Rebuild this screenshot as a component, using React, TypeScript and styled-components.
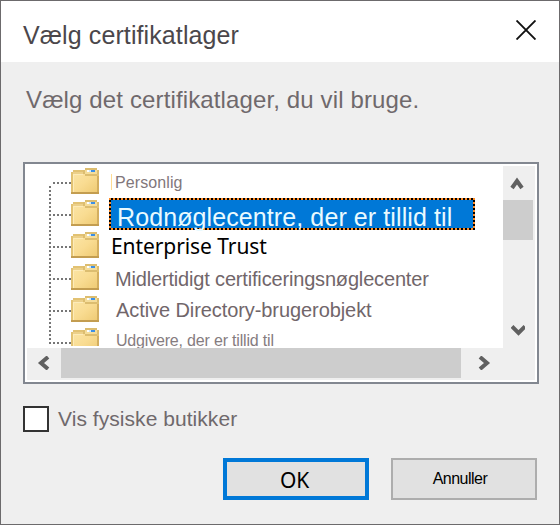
import React from "react";
import styled, { createGlobalStyle } from "styled-components";

const GlobalStyle = createGlobalStyle`
  *, *::before, *::after { box-sizing: border-box; }
  body { margin: 0; font-family: "Liberation Sans", Arial, sans-serif; }
  button { font: inherit; }
`;

const Dialog = styled.div`
  display: flex;
  flex-direction: column;
  width: 560px;
  height: 525px;
  overflow: hidden;
  border: 1px solid #6c6a6c;
  background: #efefef;
`;

const TitleBar = styled.header`
  display: flex;
  justify-content: space-between;
  height: 61px;
  flex: none;
  padding: 0 22px 0 22px;
  background: #fff;
`;

const Title = styled.h1`
  margin: 0;
  padding-top: 4px;
  font-size: 25px;
  font-weight: 400;
  line-height: 61px;
  letter-spacing: 0.1px;
  color: #4b474b;
  white-space: nowrap;
`;

const CloseButton = styled.button`
  display: flex;
  width: 20px;
  height: 20px;
  margin: 19px 1px 0 0;
  padding: 0;
  border: 0;
  background: none;
`;

const Body = styled.main`
  display: flex;
  flex-direction: column;
  padding: 0 20px 0 22px;
`;

const Prompt = styled.p`
  height: 100px;
  margin: 0;
  padding: 18px 0 0 3px;
  font-size: 24px;
  line-height: 40px;
  letter-spacing: 0.13px;
  color: #6f696c;
  white-space: nowrap;
`;

const ListBox = styled.section`
  display: grid;
  grid-template-columns: 476px 32px;
  grid-template-rows: 182px 32px;
  width: 516px;
  height: 222px;
  border: 2px solid #828790;
  padding: 2px;
  background: #fff;
`;

const Tree = styled.ul`
  margin: 0;
  padding: 0;
  overflow: hidden;
  list-style: none;
`;

const TreeRow = styled.li`
  display: flex;
  height: 32px;
`;

const Branch = styled.svg`
  flex: none;
  width: 44px;
  height: 32px;
`;

const FolderSlot = styled.span<{ $cut?: boolean }>`
  flex: none;
  width: 28px;
  height: ${(p) => (p.$cut ? 18 : 26)}px;
  margin-top: 2px;
  overflow: hidden;
`;

type LabelStyle = { x: number; y: number; size: number; spacing: number; color: string; font?: string };

const Label = styled.span<{ $s: LabelStyle }>`
  display: block;
  height: 32px;
  margin-left: ${(p) => p.$s.x - 99}px;
  padding-top: ${(p) => p.$s.y}px;
  font-family: ${(p) => p.$s.font ?? '"Liberation Sans", Arial, sans-serif'};
  font-size: ${(p) => p.$s.size}px;
  line-height: 28px;
  letter-spacing: ${(p) => p.$s.spacing}px;
  color: ${(p) => p.$s.color};
  white-space: nowrap;
`;

const Caret = styled.span`
  width: 1px;
  height: 16px;
  margin: 8px -13px 0 12px;
  background: #ffdc92;
`;

const Selection = styled.span`
  display: block;
  width: 366px;
  height: 32px;
  margin-left: 10px;
  padding: 2px;
  background: repeating-conic-gradient(#000 0 25%, #ff8c27 0 50%) 0 0 / 4px 4px;
`;

const SelectionText = styled.span`
  display: block;
  height: 28px;
  padding: 3px 0 0 6px;
  background: #0078d7;
  font-size: 25px;
  line-height: 28px;
  letter-spacing: 0.1px;
  color: #e9faff;
  white-space: nowrap;
`;

const VerticalBar = styled.div`
  display: flex;
  flex-direction: column;
  align-items: flex-start;
  background: #efefef;
`;

const HorizontalBar = styled.div`
  display: flex;
  grid-column: 1 / -1;
  background: #efefef;
`;

const ArrowCell = styled.span<{ $w: number; $h: number }>`
  display: flex;
  align-items: center;
  justify-content: center;
  width: ${(p) => p.$w}px;
  height: ${(p) => p.$h}px;
`;

const Thumb = styled.div<{ $w: number; $h: number }>`
  width: ${(p) => p.$w}px;
  height: ${(p) => p.$h}px;
  background: #cdcdcd;
`;

const Track = styled.div`
  flex: 1;
`;

const CheckRow = styled.label`
  display: flex;
  height: 26px;
  margin-top: 22px;
  gap: 9px;
  font-size: 21px;
  line-height: 26px;
  letter-spacing: 0.05px;
  color: #6f696c;
`;

const CheckBox = styled.input`
  appearance: none;
  width: 26px;
  height: 26px;
  margin: 0;
  border: 2px solid #333;
  background: #fff;
`;

const Footer = styled.footer`
  display: flex;
  justify-content: flex-end;
  gap: 22px;
  margin-top: 26px;
  padding-right: 2px;
`;

const Button = styled.button<{ $primary?: boolean }>`
  width: 146px;
  height: 42px;
  padding: ${(p) => (p.$primary ? "1px 3px 0 0" : "0 8px 0 0")};
  border: ${(p) => (p.$primary ? "4px solid #0078d7" : "2px solid #adadad")};
  background: #e1e1e1;
  color: #000;
  font-family: ${(p) => (p.$primary ? '"Noto Sans", sans-serif' : '"Liberation Sans", sans-serif')};
  font-size: ${(p) => (p.$primary ? 21 : 16)}px;
  line-height: 28px;
  letter-spacing: ${(p) => (p.$primary ? -0.3 : -0.5)}px;
`;

const Folder = () => (
  <svg width="28" height="26" viewBox="0 0 28 26" shapeRendering="crispEdges">
    <defs>
      <linearGradient id="folderFront" x1="0" y1="0" x2="1" y2="1">
        <stop offset="0" stopColor="#fbe5a6" />
        <stop offset="0.5" stopColor="#f9dc92" />
        <stop offset="1" stopColor="#efcb75" />
      </linearGradient>
    </defs>
    <path d="M0 4h2V2h10v2h14v2h2v20H0z" fill="#e2c273" />
    <path d="M2 4h24v20H2z" fill="url(#folderFront)" />
    <path d="M2 4h10v2H2z" fill="#ecd08a" />
    <path d="M2 6h10v1H3v17H2z" fill="#fdebb8" />
    <path d="M12 2h2V0h12v2h2v4h-2v2H14V6h-2z" fill="#dcbd70" />
    <path d="M14 2h12v4H14z" fill="#f5dd9a" />
    <path d="M16 2h8v2h-8z" fill="#fff" />
    <path d="M18 2h2v2h-2z" fill="#cfe9fc" />
    <path d="M20 2h4v2h-4z" fill="#3c8fe5" />
    <path d="M26 8h2v18h-2z" fill="#d3ae5f" />
    <path d="M0 24h28v2H0z" fill="#c39d50" />
  </svg>
);

const BranchLines = ({ first, last }: { first?: boolean; last?: boolean }) => (
  <Branch viewBox="0 0 44 32" shapeRendering="crispEdges" stroke="#767676" strokeWidth="2">
    <path d={`M23 ${first ? 20 : 0}V${last ? 18 : 32}`} strokeDasharray="2 2" />
    <path d="M26 17H44" strokeDasharray="2 2" />
  </Branch>
);

const chevrons = {
  up: "M2 12L7 5L12 12",
  down: "M1 3.5L7.5 10L14 3.5",
  left: "M11 1L4 7L11 13",
  right: "M2 1L9 7L2 13",
};

const Chevron = ({ dir }: { dir: keyof typeof chevrons }) => (
  <svg width="14" height="14" viewBox="0 0 14 14" fill="none" stroke="#606060" strokeWidth="4">
    <path d={chevrons[dir]} />
  </svg>
);

type Store = { name: string; style?: LabelStyle; caret?: boolean };

const stores: Store[] = [
  { name: "Personlig", caret: true, style: { x: 115, y: 3, size: 16, spacing: 0.1, color: "#81777b" } },
  { name: "Rodnøglecentre, der er tillid til" },
  {
    name: "Enterprise Trust",
    style: { x: 111, y: 2, size: 21, spacing: -0.08, color: "#000", font: '"Noto Sans", sans-serif' },
  },
  { name: "Midlertidigt certificeringsnøglecenter", style: { x: 115, y: 3, size: 20, spacing: -0.17, color: "#71666a" } },
  { name: "Active Directory-brugerobjekt", style: { x: 116, y: 2, size: 20, spacing: -0.08, color: "#71666a" } },
  { name: "Udgivere, der er tillid til", style: { x: 116, y: 1, size: 16, spacing: -0.18, color: "#857c80" } },
];

export default function App() {
  return (
    <>
      <GlobalStyle />
      <Dialog role="dialog">
        <TitleBar>
          <Title>Vælg certifikatlager</Title>
          <CloseButton aria-label="Luk">
            <svg width="20" height="20" viewBox="0 0 20 20" stroke="#111" strokeWidth="1.9">
              <path d="M0.5 0.5L19.5 19.5M19.5 0.5L0.5 19.5" />
            </svg>
          </CloseButton>
        </TitleBar>
        <Body>
          <Prompt>Vælg det certifikatlager, du vil bruge.</Prompt>
          <ListBox>
            <Tree>
              {stores.map((store, i) => (
                <TreeRow key={store.name}>
                  <BranchLines first={i === 0} last={i === stores.length - 1} />
                  <FolderSlot $cut={i === stores.length - 1}>
                    <Folder />
                  </FolderSlot>
                  {store.caret && <Caret />}
                  {store.style ? (
                    <Label $s={store.style}>{store.name}</Label>
                  ) : (
                    <Selection>
                      <SelectionText>{store.name}</SelectionText>
                    </Selection>
                  )}
                </TreeRow>
              ))}
            </Tree>
            <VerticalBar>
              <ArrowCell $w={28} $h={34}>
                <Chevron dir="up" />
              </ArrowCell>
              <Thumb $w={30} $h={40} />
              <Track />
              <ArrowCell $w={30} $h={36}>
                <Chevron dir="down" />
              </ArrowCell>
            </VerticalBar>
            <HorizontalBar>
              <ArrowCell $w={34} $h={30}>
                <Chevron dir="left" />
              </ArrowCell>
              <Thumb $w={400} $h={30} />
              <ArrowCell $w={48} $h={30}>
                <Chevron dir="right" />
              </ArrowCell>
            </HorizontalBar>
          </ListBox>
          <CheckRow>
            <CheckBox type="checkbox" />
            Vis fysiske butikker
          </CheckRow>
          <Footer>
            <Button $primary>OK</Button>
            <Button>Annuller</Button>
          </Footer>
        </Body>
      </Dialog>
    </>
  );
}
